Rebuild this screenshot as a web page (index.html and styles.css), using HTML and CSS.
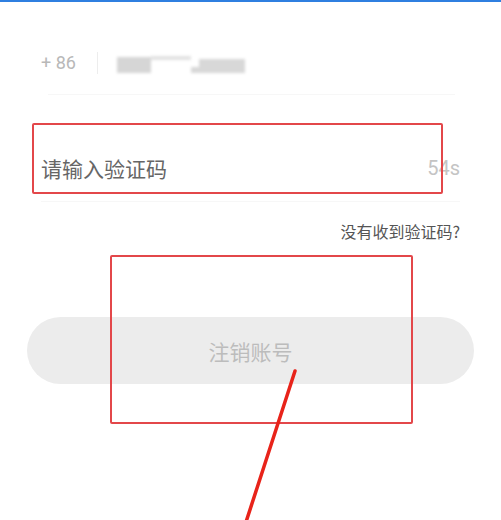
FILE: index.html
```html
<!DOCTYPE html>
<html lang="zh-CN">
<head>
<meta charset="utf-8">
<title>注销账号</title>
<link rel="stylesheet" href="styles.css">
</head>
<body>
<div class="page">
  <div class="topbar"></div>
  <div class="phone-row">
    <span class="code">+ 86</span>
    <span class="divider"></span>
    <div class="masked">
      <span class="m m1"></span>
      <span class="m m2"></span>
      <span class="m m3"></span>
      <span class="m m4"></span>
    </div>
  </div>
  <div class="rule rule-phone"></div>
  <div class="input-row">
    <span class="placeholder">请输入验证码</span>
    <span class="timer">54s</span>
  </div>
  <div class="rule rule-input"></div>
  <div class="hint-row">
    <span class="hint">没有收到验证码?</span>
  </div>
  <div class="btn">注销账号</div>

  <div class="mark mark-input"></div>
  <div class="mark mark-btn"></div>
  <svg class="arrow" width="501" height="520" viewBox="0 0 501 520">
    <line x1="295" y1="371" x2="246" y2="522" stroke="#e8231a" stroke-width="3.5" stroke-linecap="round"/>
  </svg>
</div>
</body>
</html>
```
FILE: styles.css
```css
html, body {
  margin: 0;
  padding: 0;
  background: #ffffff;
}
body {
  font-family: "Noto Sans CJK SC", "Noto Sans", Roboto, sans-serif;
  overflow: hidden;
}
.page {
  position: relative;
  width: 501px;
  height: 520px;
  display: flex;
  flex-direction: column;
}
.topbar {
  height: 2px;
  background: #2f7fe0;
}
.phone-row {
  margin-top: 41px;
  height: 40px;
  padding-left: 41px;
  display: flex;
  align-items: center;
}
.code {
  font-family: Roboto, "Noto Sans", sans-serif;
  font-size: 18px;
  color: #b8b8b8;
  width: 38px;
  line-height: 1;
}
.divider {
  width: 1px;
  height: 22px;
  background: #ededed;
  margin-left: 18px;
}
.masked {
  margin-left: 19px;
  width: 130px;
  height: 20px;
  position: relative;
  filter: blur(1.6px);
  display: flex;
  align-items: flex-end;
}
.m {
  display: block;
  background: #dcdcdc;
}
.m1 { width: 34px; height: 16px; background: #d6d6d6; }
.m2 { width: 40px; height: 4px; margin-bottom: 13px; background: #e2e2e2; }
.m3 { width: 8px; height: 6px; background: #d8d8d8; }
.m4 { width: 46px; height: 14px; background: #d8d8d8; }
.rule {
  height: 1px;
  background: #f7f7f7;
}
.rule-phone {
  margin: 11px 46px 0 48px;
}
.rule-input {
  margin: 3px 41px 0 41px;
}
.input-row {
  margin-top: 43px;
  height: 60px;
  padding: 0 41px;
  display: flex;
  align-items: center;
  justify-content: space-between;
}
.placeholder {
  font-size: 21px;
  color: #666666;
  line-height: 1;
}
.timer {
  font-family: Roboto, "Noto Sans", sans-serif;
  font-size: 20px;
  color: #c4c4c4;
  line-height: 1;
}
.hint-row {
  margin-top: 16px;
  height: 25px;
  padding: 0 41px;
  display: flex;
  justify-content: flex-end;
  align-items: center;
}
.hint {
  font-size: 16px;
  color: #555555;
  line-height: 1;
}
.btn {
  margin: 74px 27px 0;
  height: 67px;
  border-radius: 34px;
  background: #ececec;
  color: #bcbcbc;
  font-size: 21px;
  display: flex;
  align-items: center;
  justify-content: center;
}
.mark {
  position: absolute;
  border: 2px solid #e3474a;
  border-radius: 2px;
  box-sizing: border-box;
}
.mark-input {
  left: 32px;
  top: 123px;
  width: 411px;
  height: 71px;
}
.mark-btn {
  left: 110px;
  top: 255px;
  width: 303px;
  height: 169px;
}
.arrow {
  position: absolute;
  left: 0;
  top: 0;
}
```
